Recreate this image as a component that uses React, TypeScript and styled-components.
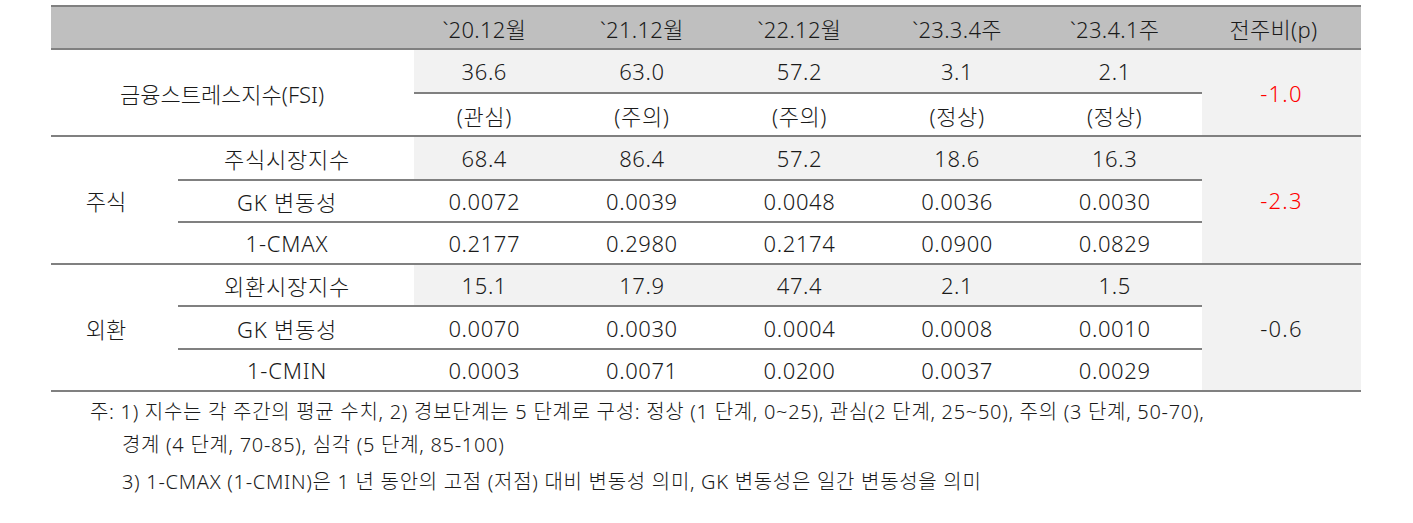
import React from "react";
import styled, { createGlobalStyle } from "styled-components";

const GlobalStyle = createGlobalStyle`
  html, body {
    margin: 0;
    padding: 0;
    background: #ffffff;
  }
  body {
    font-family: "Noto Sans", "Noto Sans CJK KR", sans-serif;
    color: #1a1a1a;
  }
`;

const LINE = "#808080";

const Page = styled.div`
  padding: 5px 0 0 51px;
  width: 1310px;
`;

const Table = styled.div`
  width: 1310px;
  border-top: 2px solid ${LINE};
  font-size: 22px;
  font-weight: 300;
`;

const HeaderRow = styled.div`
  display: flex;
  height: 41px;
  background: #bfbfbf;
  border-bottom: 2px solid ${LINE};
`;

const HeadCell = styled.div<{ $w: number; $pr?: number }>`
  flex: none;
  width: ${(p) => p.$w}px;
  box-sizing: border-box;
  padding-right: ${(p) => p.$pr ?? 17}px;
  display: flex;
  align-items: center;
  justify-content: center;
  white-space: nowrap;
  letter-spacing: 0.3px;
`;

const Section = styled.div`
  display: flex;
  border-bottom: 2px solid ${LINE};
`;

const GroupLabel = styled.div<{ $w: number; $pr: number }>`
  flex: none;
  width: ${(p) => p.$w}px;
  box-sizing: border-box;
  padding-right: ${(p) => p.$pr}px;
  display: flex;
  align-items: center;
  justify-content: center;
  white-space: nowrap;
`;

const Rows = styled.div`
  flex: none;
  display: flex;
  flex-direction: column;
`;

const Row = styled.div<{ $h: number }>`
  display: flex;
  height: ${(p) => p.$h}px;
  & + & {
    border-top: 2px solid ${LINE};
  }
`;

const SubLabel = styled.div`
  flex: none;
  width: 236px;
  box-sizing: border-box;
  padding-right: 18px;
  display: flex;
  align-items: center;
  justify-content: center;
  white-space: nowrap;
  letter-spacing: 0.8px;
`;

const DataCell = styled.div<{ $shade: boolean }>`
  flex: none;
  width: 157.6px;
  box-sizing: border-box;
  padding-right: 17px;
  display: flex;
  align-items: center;
  justify-content: center;
  background: ${(p) => (p.$shade ? "#f2f2f2" : "transparent")};
  white-space: nowrap;
  letter-spacing: 0.6px;
`;

const ChangeCell = styled.div<{ $red: boolean }>`
  flex: none;
  width: 159px;
  display: flex;
  align-items: center;
  justify-content: center;
  background: #f2f2f2;
  color: ${(p) => (p.$red ? "#ff0000" : "#1a1a1a")};
  letter-spacing: 1.2px;
`;

const Notes = styled.div`
  padding-left: 71px;
  margin-top: 3px;
  font-size: 20px;
  font-weight: 300;
  line-height: 33px;
  letter-spacing: 0.7px;
`;

const NoteLine = styled.div<{ $gap?: number; $hang?: boolean }>`
  white-space: nowrap;
  margin-top: ${(p) => p.$gap ?? 0}px;
  text-indent: ${(p) => (p.$hang ? -32 : 0)}px;
`;

const headers = ["`20.12월", "`21.12월", "`22.12월", "`23.3.4주", "`23.4.1주"];

type RowData = { label?: string; values: string[]; h: number };

const fsiRows: RowData[] = [
  { values: ["36.6", "63.0", "57.2", "3.1", "2.1"], h: 42 },
  { values: ["(관심)", "(주의)", "(주의)", "(정상)", "(정상)"], h: 41 },
];

const groups: { name: string; change: string; red: boolean; rows: RowData[] }[] = [
  {
    name: "주식",
    change: "-2.3",
    red: true,
    rows: [
      { label: "주식시장지수", values: ["68.4", "86.4", "57.2", "18.6", "16.3"], h: 42 },
      { label: "GK 변동성", values: ["0.0072", "0.0039", "0.0048", "0.0036", "0.0030"], h: 40 },
      { label: "1-CMAX", values: ["0.2177", "0.2980", "0.2174", "0.0900", "0.0829"], h: 40 },
    ],
  },
  {
    name: "외환",
    change: "-0.6",
    red: false,
    rows: [
      { label: "외환시장지수", values: ["15.1", "17.9", "47.4", "2.1", "1.5"], h: 40 },
      { label: "GK 변동성", values: ["0.0070", "0.0030", "0.0004", "0.0008", "0.0010"], h: 41 },
      { label: "1-CMIN", values: ["0.0003", "0.0071", "0.0200", "0.0037", "0.0029"], h: 40 },
    ],
  },
];

export default function App() {
  return (
    <>
      <GlobalStyle />
      <Page>
        <Table>
          <HeaderRow>
            <HeadCell $w={363} />
            {headers.map((h) => (
              <HeadCell key={h} $w={157.6}>
                {h}
              </HeadCell>
            ))}
            <HeadCell $w={159} $pr={16}>
              전주비(p)
            </HeadCell>
          </HeaderRow>

          <Section>
            <GroupLabel $w={363} $pr={21}>
              금융스트레스지수(FSI)
            </GroupLabel>
            <Rows>
              {fsiRows.map((r, i) => (
                <Row key={i} $h={r.h}>
                  {r.values.map((v, j) => (
                    <DataCell key={j} $shade={i === 0}>
                      {v}
                    </DataCell>
                  ))}
                </Row>
              ))}
            </Rows>
            <ChangeCell $red>-1.0</ChangeCell>
          </Section>

          {groups.map((g) => (
            <Section key={g.name}>
              <GroupLabel $w={127} $pr={17}>
                {g.name}
              </GroupLabel>
              <Rows>
                {g.rows.map((r, i) => (
                  <Row key={i} $h={r.h}>
                    <SubLabel>{r.label}</SubLabel>
                    {r.values.map((v, j) => (
                      <DataCell key={j} $shade={i === 0}>
                        {v}
                      </DataCell>
                    ))}
                  </Row>
                ))}
              </Rows>
              <ChangeCell $red={g.red}>{g.change}</ChangeCell>
            </Section>
          ))}
        </Table>

        <Notes>
          <NoteLine $hang>
            주: 1) 지수는 각 주간의 평균 수치, 2) 경보단계는 5 단계로 구성: 정상 (1 단계, 0~25), 관심(2 단계, 25~50), 주의 (3 단계, 50-70),
          </NoteLine>
          <NoteLine>경계 (4 단계, 70-85), 심각 (5 단계, 85-100)</NoteLine>
          <NoteLine $gap={4}>
            3) 1-CMAX (1-CMIN)은 1 년 동안의 고점 (저점) 대비 변동성 의미, GK 변동성은 일간 변동성을 의미
          </NoteLine>
        </Notes>
      </Page>
    </>
  );
}
